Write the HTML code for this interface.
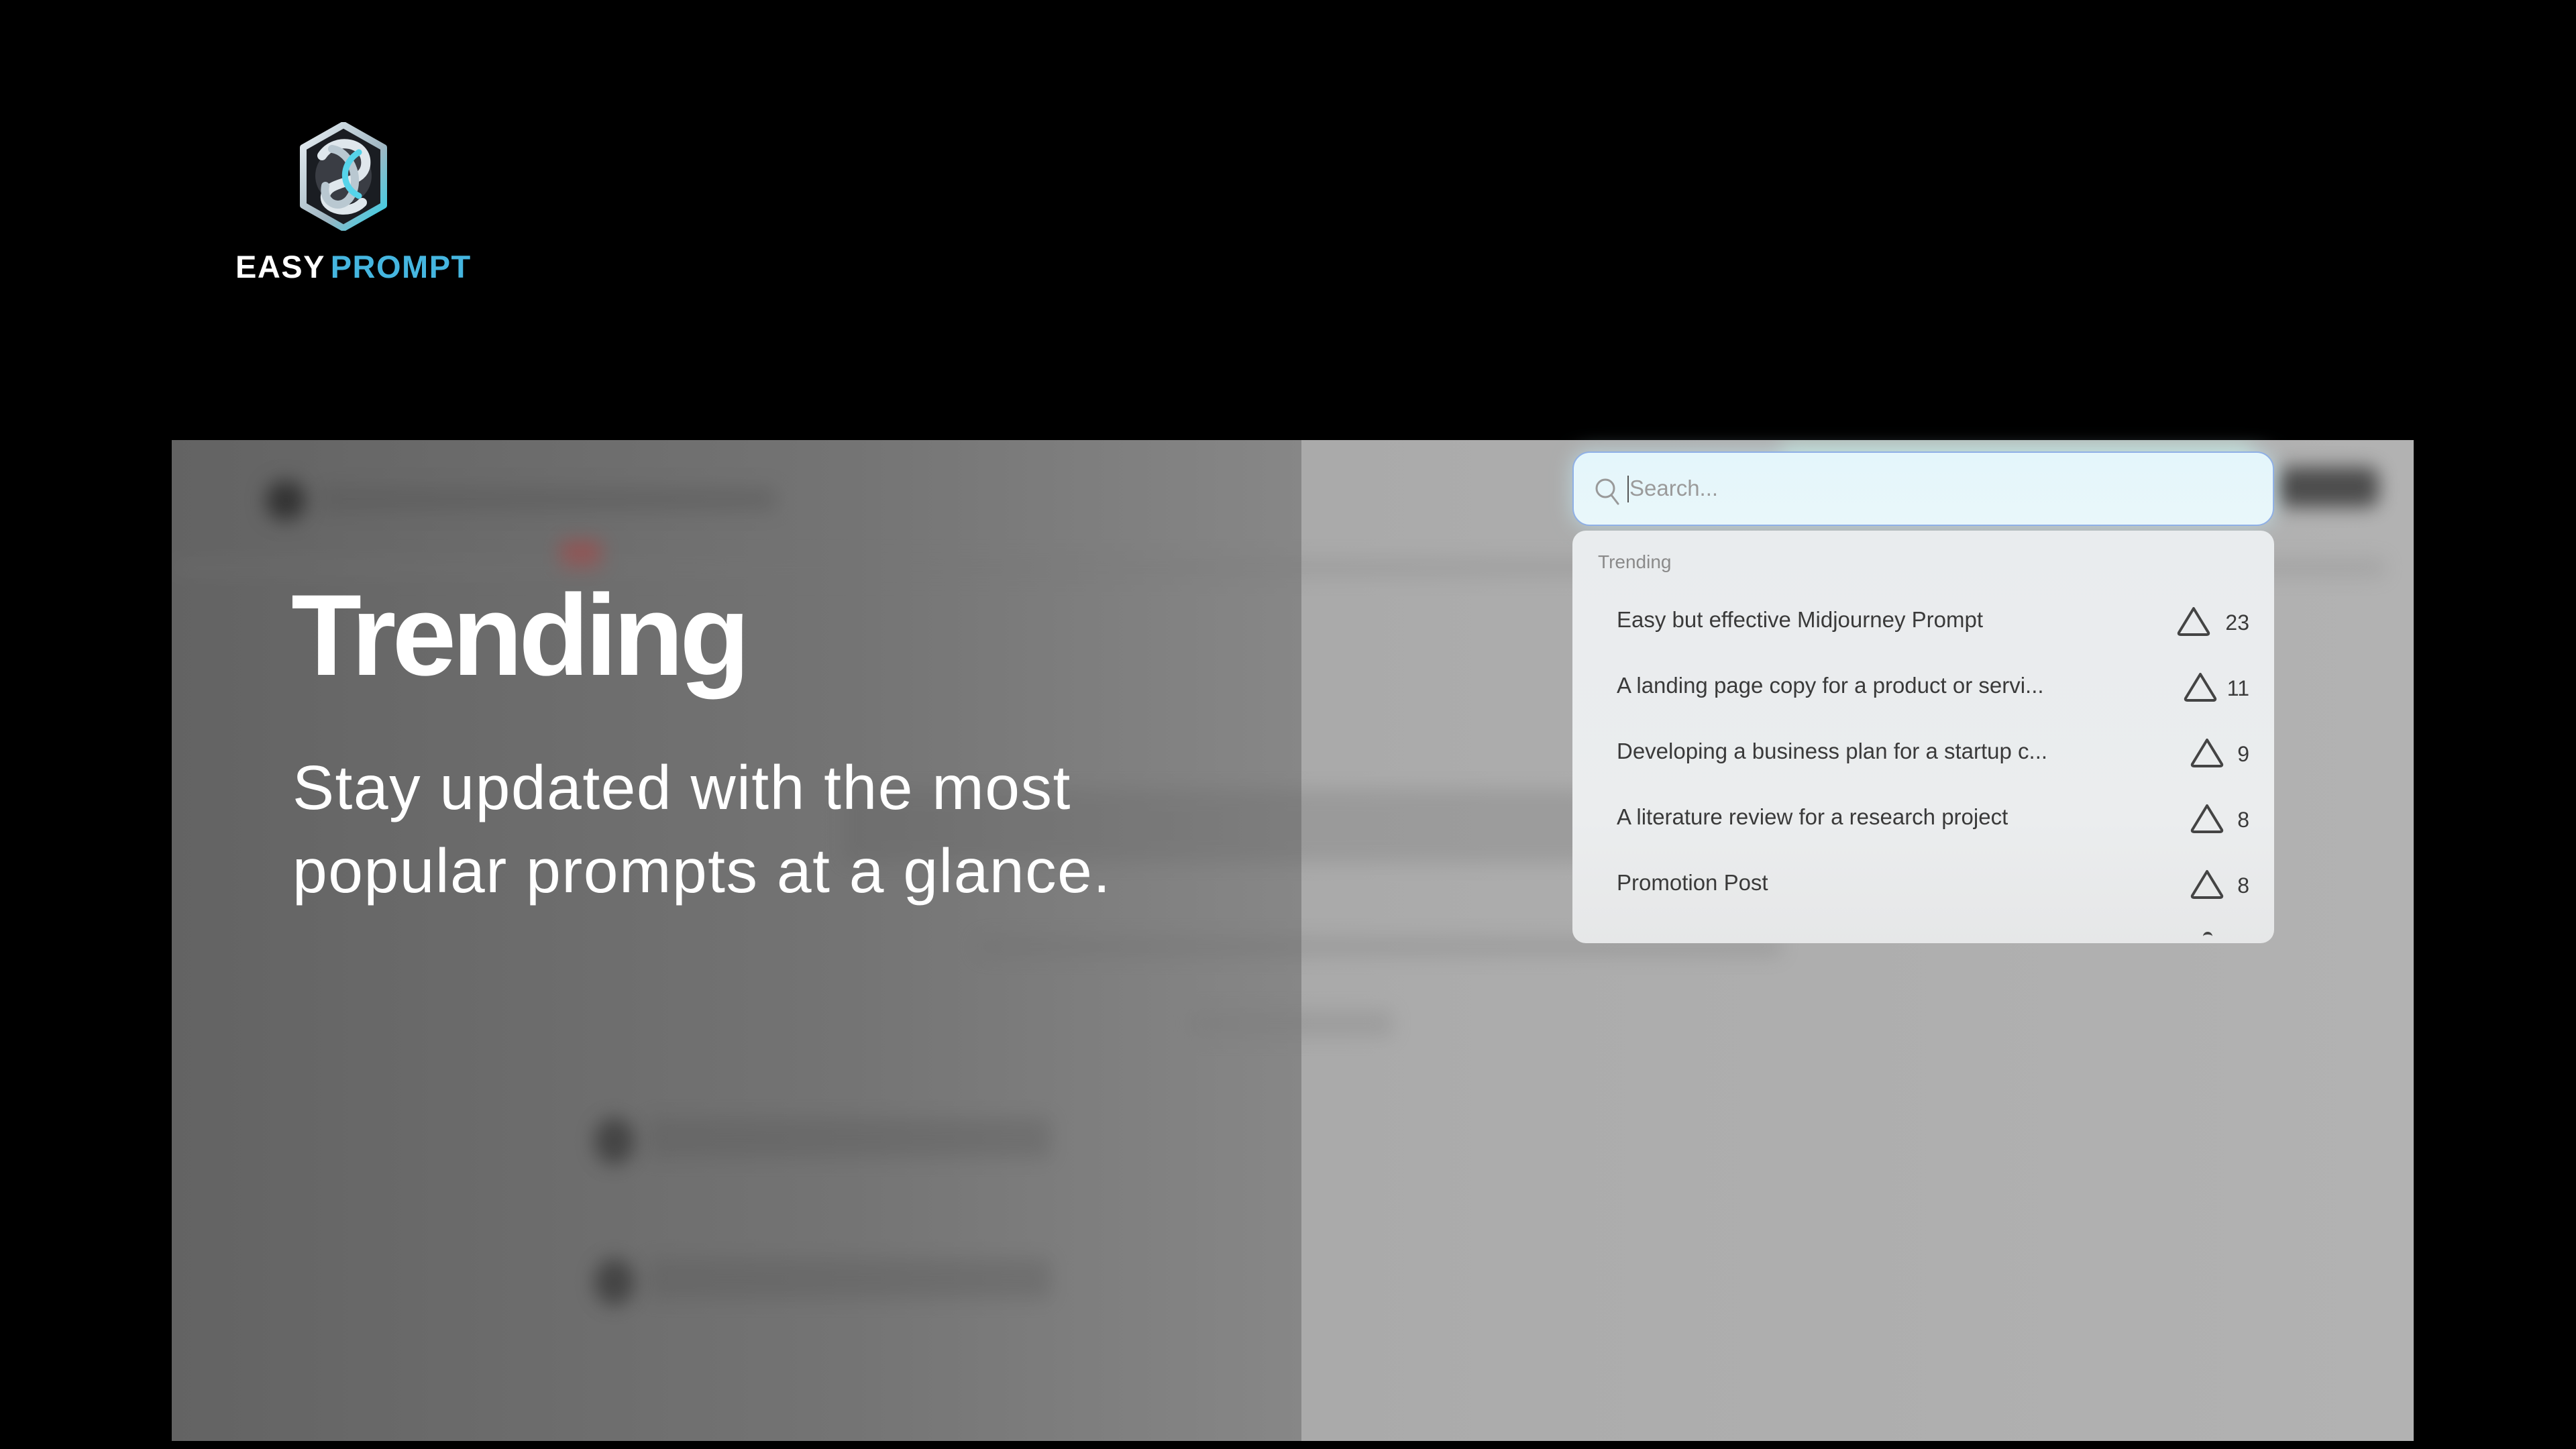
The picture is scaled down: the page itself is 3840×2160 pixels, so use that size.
<!DOCTYPE html>
<html><head><meta charset="utf-8"><style>
*{margin:0;padding:0;box-sizing:border-box}
body{width:3840px;height:2160px;background:#000;position:relative;overflow:hidden;font-family:"Liberation Sans",sans-serif}
.abs{position:absolute}
#panel{left:256px;top:656px;width:3342px;height:1492px;background:linear-gradient(90deg,#9d9d9d 0%,#acacac 60%,#b2b2b2 100%);overflow:hidden}
#left{left:0;top:0;width:1684px;height:1492px;background:linear-gradient(90deg,#636363 0%,#747474 60%,#878787 100%)}
.blur{position:absolute;filter:blur(14px)}
#search{left:2344px;top:673px;width:1046px;height:111px;border-radius:26px;background:linear-gradient(180deg,#e4f6fb,#e9f7fa);border:2px solid #8fb0e6;box-shadow:0 0 30px rgba(200,240,250,.6)}
#drop{left:2344px;top:791px;width:1046px;height:615px;border-radius:20px;background:linear-gradient(180deg,#e9ecee,#ebedee 70%,#e6e7e8)}
.item{position:absolute;left:66px;font-size:33px;color:#3a3a3a}
.num{position:absolute;font-size:32px;color:#3a3a3a;right:37px}
.tri{position:absolute;width:52px;height:46px}
</style></head><body>

<svg class="abs" style="left:440px;top:182px" width="145" height="162" viewBox="0 0 145 162">
<defs><linearGradient id="g" x1="0" y1="0" x2="1" y2="1"><stop offset="0" stop-color="#e8eef2"/><stop offset="0.6" stop-color="#9fb6c2"/><stop offset="1" stop-color="#2fd0e8"/></linearGradient></defs>
<polygon points="72,4 132,38 132,124 72,158 12,124 12,38" fill="#1a1d22" stroke="url(#g)" stroke-width="10" stroke-linejoin="round"/>
<circle cx="72" cy="80" r="42" fill="#3a3d44"/>
<path d="M40,50 C60,20 110,30 105,65 C100,95 50,85 45,110 C42,130 80,140 100,120" fill="none" stroke="#dfe7ec" stroke-width="14" stroke-linecap="round"/>
<path d="M55,40 C85,45 100,90 80,115 C65,132 40,120 45,95" fill="none" stroke="#b9c8d1" stroke-width="12" stroke-linecap="round"/>
<path d="M95,45 C70,60 65,95 95,110" fill="none" stroke="#56d4ea" stroke-width="9" stroke-linecap="round"/>
</svg>
<div class="abs" style="left:351px;top:370px;font-size:47px;font-weight:bold;letter-spacing:1.5px;color:#fff;white-space:nowrap">EASY <span style="color:#45b6e0;margin-left:-6px">PROMPT</span></div>

<div id="panel" class="abs">
  <div id="left" class="abs"></div>
  <div class="blur" style="left:140px;top:60px;width:60px;height:60px;border-radius:50%;background:#333"></div>
  <div class="blur" style="left:220px;top:70px;width:680px;height:36px;background:#555;opacity:.4"></div>
  <div class="blur" style="left:580px;top:150px;width:60px;height:40px;background:#a44;opacity:.6"></div>
  <div class="blur" style="left:0;top:175px;width:3300px;height:30px;background:#777;opacity:.2"></div>
  <div class="blur" style="left:1000px;top:520px;width:1300px;height:110px;background:#555;opacity:.18"></div>
  <div class="blur" style="left:1200px;top:740px;width:1200px;height:30px;background:#666;opacity:.2"></div>
  <div class="blur" style="left:1520px;top:850px;width:300px;height:40px;background:#777;opacity:.25"></div>
  <div class="blur" style="left:630px;top:1010px;width:60px;height:70px;border-radius:50%;background:#333;opacity:.7"></div>
  <div class="blur" style="left:710px;top:1010px;width:600px;height:60px;background:#555;opacity:.3"></div>
  <div class="blur" style="left:630px;top:1220px;width:60px;height:70px;border-radius:50%;background:#333;opacity:.7"></div>
  <div class="blur" style="left:710px;top:1220px;width:600px;height:60px;background:#555;opacity:.3"></div>
  <div class="blur" style="left:3140px;top:40px;width:150px;height:60px;border-radius:16px;background:#333;opacity:.8"></div>
  <div class="blur" style="left:2400px;top:0;width:700px;height:60px;background:#cfe;opacity:.4"></div>
</div>

<div class="abs" style="left:434px;top:848px;font-size:172px;font-weight:bold;color:#fff;letter-spacing:-6px">Trending</div>
<div class="abs" style="left:436px;top:1112px;font-size:93px;line-height:124px;color:#fff;width:1600px;letter-spacing:1.5px">Stay updated with the most<br>popular prompts at a glance.</div>

<div id="search" class="abs">
  <svg class="abs" style="left:30px;top:36px" width="40" height="44" viewBox="0 0 40 44"><circle cx="17" cy="17" r="13" fill="none" stroke="#999" stroke-width="3"/><line x1="26" y1="27" x2="36" y2="40" stroke="#999" stroke-width="3" stroke-linecap="round"/></svg>
  <div class="abs" style="left:80px;top:34px;width:2px;height:40px;background:#555"></div>
  <div class="abs" style="left:83px;top:34px;font-size:33px;color:#9a9a9a">Search...</div>
</div>

<div id="drop" class="abs">
  <div class="abs" style="left:38px;top:31px;font-size:28px;color:#8a8a8a">Trending</div>
  <div class="item" style="top:114px">Easy but effective Midjourney Prompt</div>
  <div class="item" style="top:212px">A landing page copy for a product or servi...</div>
  <div class="item" style="top:310px">Developing a business plan for a startup c...</div>
  <div class="item" style="top:408px">A literature review for a research project</div>
  <div class="item" style="top:506px">Promotion Post</div>
  <svg class="tri" style="left:900px;top:112px" viewBox="0 0 52 46"><path d="M26,4 L48,40 Q49,43 45,43 L7,43 Q3,43 4,40 Z" fill="none" stroke="#444" stroke-width="4" stroke-linejoin="round"/></svg><div class="num" style="top:119px">23</div>
  <svg class="tri" style="left:910px;top:210px" viewBox="0 0 52 46"><path d="M26,4 L48,40 Q49,43 45,43 L7,43 Q3,43 4,40 Z" fill="none" stroke="#444" stroke-width="4" stroke-linejoin="round"/></svg><div class="num" style="top:217px">11</div>
  <svg class="tri" style="left:920px;top:308px" viewBox="0 0 52 46"><path d="M26,4 L48,40 Q49,43 45,43 L7,43 Q3,43 4,40 Z" fill="none" stroke="#444" stroke-width="4" stroke-linejoin="round"/></svg><div class="num" style="top:315px">9</div>
  <svg class="tri" style="left:920px;top:406px" viewBox="0 0 52 46"><path d="M26,4 L48,40 Q49,43 45,43 L7,43 Q3,43 4,40 Z" fill="none" stroke="#444" stroke-width="4" stroke-linejoin="round"/></svg><div class="num" style="top:413px">8</div>
  <svg class="tri" style="left:920px;top:504px" viewBox="0 0 52 46"><path d="M26,4 L48,40 Q49,43 45,43 L7,43 Q3,43 4,40 Z" fill="none" stroke="#444" stroke-width="4" stroke-linejoin="round"/></svg><div class="num" style="top:511px">8</div>
  <div class="abs" style="left:940px;top:598px;width:14px;height:8px;border-top:4px solid #444;border-radius:8px 8px 0 0"></div>
</div>
</body></html>
